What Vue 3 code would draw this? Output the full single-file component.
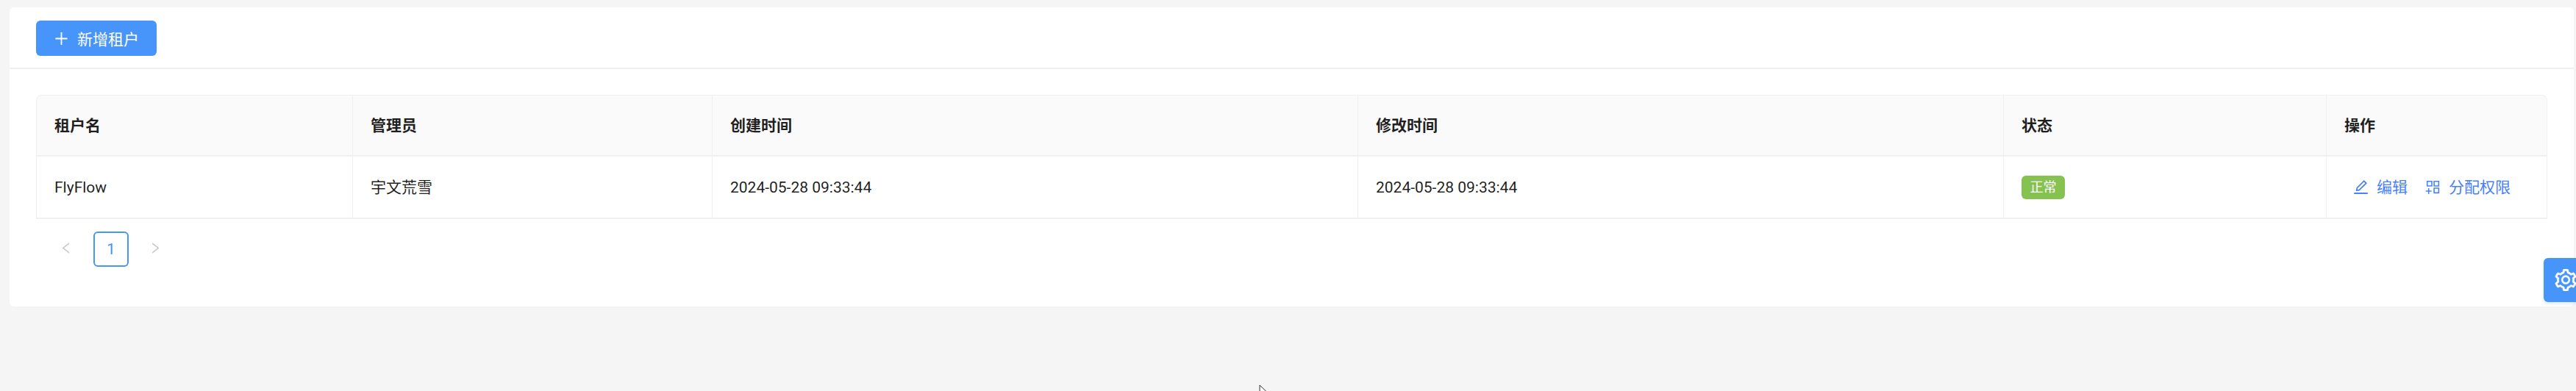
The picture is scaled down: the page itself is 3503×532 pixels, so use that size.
<template>
  <div class="page">
    <div class="card">
      <div class="toolbar">
        <button class="add-btn" type="button">
          <svg class="icon" viewBox="64 64 896 896" width="21" height="21" fill="currentColor">
            <path d="M482 152h60q8 0 8 8v704q0 8-8 8h-60q-8 0-8-8V160q0-8 8-8z" />
            <path d="M176 474h672q8 0 8 8v60q0 8-8 8H176q-8 0-8-8v-60q0-8 8-8z" />
          </svg>
          <span>新增租户</span>
        </button>
      </div>
      <div class="content">
        <table class="tenants">
          <colgroup>
            <col v-for="(w, i) in colWidths" :key="i" :style="{ width: w + 'px' }" />
          </colgroup>
          <thead>
            <tr>
              <th v-for="h in headers" :key="h">{{ h }}</th>
            </tr>
          </thead>
          <tbody>
            <tr v-for="row in rows" :key="row.name">
              <td>{{ row.name }}</td>
              <td>{{ row.admin }}</td>
              <td>{{ row.created }}</td>
              <td>{{ row.updated }}</td>
              <td><span class="tag">{{ row.status }}</span></td>
              <td>
                <div class="actions">
                  <a class="action">
                    <svg viewBox="64 64 896 896" width="21" height="21" fill="currentColor">
                      <path d="M257.700 752c2 0 4-.2 6-.5L431.900 722c2-.4 3.900-1.300 5.300-2.800l423.900-423.900a9.960 9.960 0 0 0 0-14.100L694.900 114.900c-1.900-1.900-4.400-2.900-7.100-2.900s-5.200 1-7.100 2.900L256.800 538.800c-1.500 1.500-2.400 3.300-2.800 5.300l-29.500 168.200a33.500 33.500 0 0 0 9.400 29.800c6.600 6.400 14.900 9.900 23.800 9.900zm67.400-174.400L687.800 215l73.300 73.300-362.700 362.600-88.900 15.700 15.600-89zM880 836H144c-17.700 0-32 14.300-32 32v36c0 4.400 3.600 8 8 8h784c4.400 0 8-3.600 8-8v-36c0-17.700-14.300-32-32-32z" />
                    </svg>
                    编辑
                  </a>
                  <a class="action">
                    <svg viewBox="64 64 896 896" width="21" height="21" fill="currentColor">
                      <path d="M464 144H160c-8.800 0-16 7.200-16 16v304c0 8.800 7.200 16 16 16h304c8.800 0 16-7.200 16-16V160c0-8.800-7.200-16-16-16zm-52 268H212V212h200v200zm452-268H560c-8.800 0-16 7.200-16 16v304c0 8.800 7.200 16 16 16h304c8.800 0 16-7.200 16-16V160c0-8.800-7.200-16-16-16zm-52 268H612V212h200v200zm52 132H560c-8.800 0-16 7.200-16 16v304c0 8.800 7.200 16 16 16h304c8.800 0 16-7.200 16-16V560c0-8.800-7.200-16-16-16zm-52 268H612V612h200v200zM424 712H296V584c0-4.400-3.600-8-8-8h-48c-4.400 0-8 3.600-8 8v128H104c-4.400 0-8 3.600-8 8v48c0 4.400 3.600 8 8 8h128v128c0 4.400 3.600 8 8 8h48c4.400 0 8-3.600 8-8V776h128c4.400 0 8-3.600 8-8v-48c0-4.400-3.600-8-8-8z" />
                    </svg>
                    分配权限
                  </a>
                </div>
              </td>
            </tr>
          </tbody>
        </table>
        <div class="pager">
          <svg class="chev" viewBox="252 120 524 784" width="10" height="15" fill="currentColor">
            <path d="M724 218.300V141c0-6.700-7.700-10.400-12.900-6.300L260.300 486.800a31.860 31.860 0 0 0 0 50.300l450.800 352.100c5.300 4.100 12.900.4 12.900-6.300v-77.300c0-4.900-2.300-9.600-6.100-12.600l-360-281 360-281.100c3.800-3 6.100-7.700 6.100-12.600z" />
          </svg>
          <span class="page-num">1</span>
          <svg class="chev" viewBox="296 120 524 784" width="10" height="15" fill="currentColor">
            <path d="M765.700 486.800L314.900 134.700A7.970 7.970 0 0 0 302 141v77.300c0 4.900 2.300 9.600 6.100 12.600l360 281.100-360 281.100c-3.900 3-6.100 7.700-6.100 12.600V883c0 6.700 7.700 10.400 12.900 6.300l450.800-352.100a31.960 31.960 0 0 0 0-50.400z" />
          </svg>
        </div>
      </div>
    </div>
    <div class="settings">
      <svg viewBox="64 64 896 896" width="30" height="30" fill="#fff" stroke="#fff" stroke-width="14">
        <path d="M924.800 625.700l-65.500-56c3.100-19 4.700-38.400 4.700-57.800s-1.600-38.800-4.700-57.800l65.500-56a32.030 32.030 0 0 0 9.300-35.200l-.9-2.600a443.740 443.740 0 0 0-79.700-137.900l-1.800-2.100a32.120 32.120 0 0 0-35.100-9.500l-81.300 28.900c-30-24.600-63.500-44-99.700-57.600l-15.700-85a32.050 32.050 0 0 0-25.800-25.700l-2.700-.5c-52.100-9.400-106.900-9.400-159 0l-2.700.5a32.050 32.050 0 0 0-25.800 25.700l-15.800 85.400a351.860 351.860 0 0 0-99 57.400l-81.900-29.100a32 32 0 0 0-35.100 9.500l-1.800 2.100a446.020 446.020 0 0 0-79.700 137.900l-.9 2.600c-4.500 12.500-.8 26.500 9.300 35.200l66.300 56.600c-3.100 18.800-4.600 38-4.600 57.100 0 19.200 1.500 38.400 4.600 57.100L99 625.500a32.030 32.030 0 0 0-9.300 35.200l.9 2.600c18.100 50.400 44.900 96.900 79.700 137.900l1.800 2.100a32.120 32.120 0 0 0 35.100 9.500l81.900-29.100c29.800 24.500 63.100 43.900 99 57.400l15.800 85.400a32.050 32.050 0 0 0 25.800 25.700l2.700.5a449.400 449.400 0 0 0 159 0l2.700-.5a32.050 32.050 0 0 0 25.800-25.700l15.700-85a350 350 0 0 0 99.700-57.600l81.300 28.900a32 32 0 0 0 35.100-9.500l1.800-2.100c34.800-41.100 61.600-87.500 79.700-137.900l.9-2.600c4.500-12.300.8-26.300-9.300-35zM788.300 465.900c2.500 15.100 3.800 30.600 3.800 46.100s-1.300 31-3.800 46.100l-6.600 40.100 74.700 63.900a370.030 370.030 0 0 1-42.600 73.600L721 702.800l-31.400 25.800c-23.900 19.600-50.500 35-79.300 45.800l-38.100 14.300-17.900 97a377.500 377.500 0 0 1-85 0l-17.900-97.200-37.800-14.500c-28.500-10.800-55-26.200-78.700-45.700l-31.400-25.900-93.400 33.200c-17-22.900-31.200-47.600-42.600-73.600l75.500-64.500-6.500-40c-2.400-14.900-3.700-30.300-3.700-45.500 0-15.300 1.200-30.600 3.700-45.500l6.500-40-75.500-64.500c11.300-26.100 25.600-50.700 42.600-73.600l93.400 33.200 31.400-25.900c23.700-19.500 50.200-34.900 78.700-45.700l37.900-14.300 17.900-97.200c28.100-3.200 56.800-3.200 85 0l17.900 97 38.100 14.300c28.700 10.800 55.400 26.200 79.300 45.800l31.400 25.800 92.800-32.900c17 22.900 31.200 47.600 42.600 73.600L781.800 426l6.500 39.900zM512 326c-97.200 0-176 78.800-176 176s78.800 176 176 176 176-78.800 176-176-78.800-176-176-176zm79.200 255.200A111.600 111.600 0 0 1 512 614c-29.900 0-58-11.700-79.200-32.800A111.600 111.600 0 0 1 400 502c0-29.900 11.700-58 32.800-79.200C454 401.600 482.100 390 512 390c29.900 0 58 11.600 79.200 32.800A111.600 111.600 0 0 1 624 502c0 29.900-11.700 58-32.800 79.200z" />
      </svg>
    </div>
    <svg class="cursor" viewBox="0 0 12 18" width="12" height="18">
      <path d="M1 1v14l3.500-3.200L7 17l2.500-1-2.500-5h4.500z" fill="#fff" stroke="#333" stroke-width="1" />
    </svg>
  </div>
</template>

<script setup>
const colWidths = [431, 489, 878, 878, 439, 300]
const headers = ['租户名', '管理员', '创建时间', '修改时间', '状态', '操作']
const rows = [
  {
    name: 'FlyFlow',
    admin: '宇文荒雪',
    created: '2024-05-28 09:33:44',
    updated: '2024-05-28 09:33:44',
    status: '正常'
  }
]
</script>

<style>
html,
body {
  margin: 0;
  background: #f5f5f5;
}
</style>

<style scoped>
.page {
  position: relative;
  height: 532px;
  overflow: hidden;
  padding: 10px 3px 0 13px;
  box-sizing: border-box;
  background: #f5f5f5;
  font-family: Roboto, "Noto Sans CJK SC", sans-serif;
  font-size: 21px;
  color: rgba(0, 0, 0, 0.88);
}
.card {
  height: 407px;
  box-sizing: border-box;
  background: #fff;
  border-radius: 6px;
}
.toolbar {
  height: 84px;
  box-sizing: border-box;
  padding: 18px 36px 0;
  border-bottom: 2px solid #f0f0f0;
}
.add-btn {
  display: flex;
  align-items: center;
  justify-content: center;
  gap: 11px;
  width: 164px;
  height: 48px;
  padding: 0;
  border: none;
  border-radius: 6px;
  background: #4794fb;
  color: #fff;
  font: inherit;
}
.content {
  padding: 35px 36px 0;
}
.tenants {
  width: 100%;
  table-layout: fixed;
  border-collapse: separate;
  border-spacing: 0;
}
.tenants th,
.tenants td {
  padding: 0 24px;
  text-align: left;
  line-height: 28px;
  border-right: 1px solid #f0f0f0;
  border-bottom: 2px solid #f0f0f0;
}
.tenants th:first-child,
.tenants td:first-child {
  border-left: 1px solid #f0f0f0;
}
.tenants th {
  height: 84px;
  box-sizing: border-box;
  border-top: 1px solid #f0f0f0;
  background: #fafafa;
  font-weight: 700;
}
.tenants th:first-child {
  border-top-left-radius: 8px;
}
.tenants th:last-child {
  border-top-right-radius: 8px;
}
.tenants td {
  height: 85px;
  box-sizing: border-box;
}
.tag {
  display: inline-block;
  vertical-align: middle;
  width: 59px;
  height: 32px;
  line-height: 31px;
  text-align: center;
  border-radius: 6px;
  background: #85c250;
  color: #fff;
  font-size: 18px;
}
.actions {
  display: flex;
  gap: 24px;
  padding-left: 12px;
}
.action {
  display: flex;
  align-items: center;
  gap: 11px;
  color: #4781fb;
  white-space: nowrap;
}
.pager {
  display: flex;
  align-items: center;
  padding: 17px 0 0 36px;
}
.chev {
  margin-bottom: 4px;
  color: #c8c8c8;
}
.page-num {
  width: 44px;
  height: 44px;
  margin: 0 32px;
  border: 2px solid #4794fb;
  border-radius: 6px;
  color: #4794fb;
  text-align: center;
  line-height: 44px;
}
.settings {
  position: absolute;
  top: 351px;
  right: 0;
  width: 44px;
  height: 60px;
  display: flex;
  align-items: center;
  padding-left: 15px;
  box-sizing: border-box;
  border-radius: 6px 0 0 6px;
  background: #4794fb;
  box-shadow: 0 2px 4px rgba(71, 148, 251, 0.2);
}
.settings svg {
  flex-shrink: 0;
}
.cursor {
  position: absolute;
  left: 1712px;
  top: 523px;
}
</style>
